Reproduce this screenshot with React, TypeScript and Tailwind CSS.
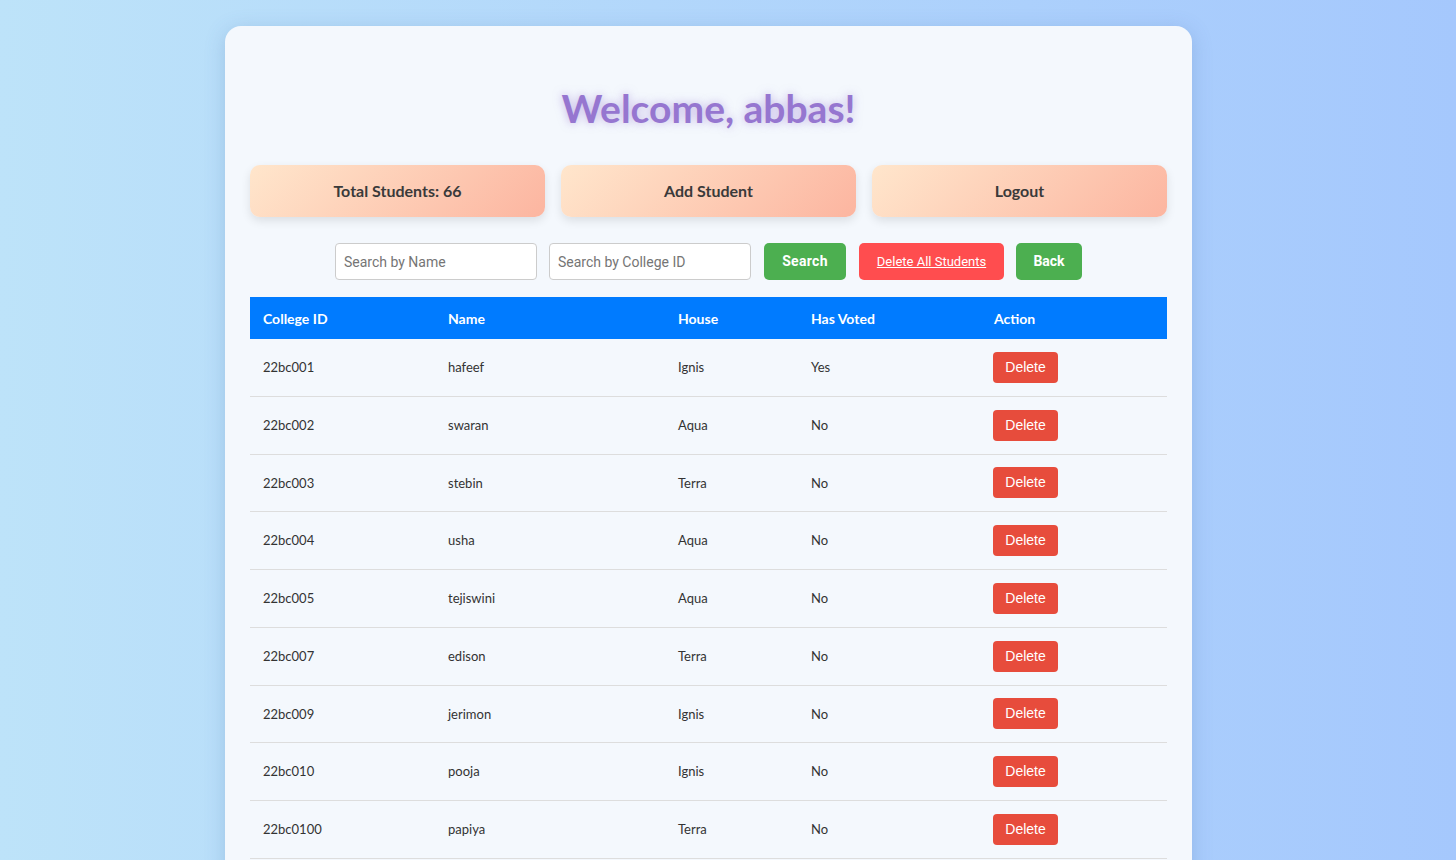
import React from "react";

const rows = [
  ["22bc001", "hafeef", "Ignis", "Yes"],
  ["22bc002", "swaran", "Aqua", "No"],
  ["22bc003", "stebin", "Terra", "No"],
  ["22bc004", "usha", "Aqua", "No"],
  ["22bc005", "tejiswini", "Aqua", "No"],
  ["22bc007", "edison", "Terra", "No"],
  ["22bc009", "jerimon", "Ignis", "No"],
  ["22bc010", "pooja", "Ignis", "No"],
  ["22bc0100", "papiya", "Terra", "No"],
];

const cols = "grid grid-cols-[185px_230px_133px_183px_186px]";

export default function App() {
  return (
    <div
      className="min-h-screen w-full bg-gradient-to-r from-[#bde3f9] to-[#a5c8fd] pt-[26px] pb-10"
      style={{ fontFamily: "Lato, 'Noto Sans', sans-serif" }}
    >
      <div className="ml-[225px] w-[967px] rounded-[16px] bg-[#f4f8fd] px-[25px] pt-[57px] pb-6 shadow-[0_4px_20px_rgba(70,110,170,0.25)]">
        <h1
          className="text-center text-[39px] font-bold leading-[50px] text-[#9676d0]"
          style={{ textShadow: "0 0 10px rgba(150,118,208,0.55)" }}
        >
          Welcome, abbas!
        </h1>
        <div className="mt-[32px] flex gap-[16px]">
          {["Total Students: 66", "Add Student", "Logout"].map((t) => (
            <div
              key={t}
              className="flex h-[52px] flex-1 items-center justify-center rounded-[10px] bg-[linear-gradient(135deg,#ffe6cc,#fcb5a0)] text-[16px] font-bold text-[#3a3a3a] shadow-[0_4px_10px_rgba(0,0,0,0.1)]"
            >
              {t}
            </div>
          ))}
        </div>
        <div
          className="mt-[26px] flex items-center justify-center gap-[12px]"
          style={{ fontFamily: "Roboto, 'Liberation Sans', sans-serif" }}
        >
          <input
            placeholder="Search by Name"
            className="h-[37px] w-[202px] rounded-[4px] border border-[#cccccc] bg-white px-[8px] text-[14px] text-[#333] placeholder:text-[#757575] outline-none"
          />
          <input
            placeholder="Search by College ID"
            className="h-[37px] w-[202px] rounded-[4px] border border-[#cccccc] bg-white px-[8px] text-[14px] text-[#333] placeholder:text-[#757575] outline-none"
          />
          <button className="ml-[1px] h-[37px] w-[82px] rounded-[5px] bg-[#4caf50] text-[14px] font-bold tracking-[0.3px] text-white">
            Search
          </button>
          <button className="ml-[1px] h-[37px] w-[145px] rounded-[5px] bg-[#ff4d4f] text-[13px] text-white underline decoration-white">
            Delete All Students
          </button>
          <button className="h-[37px] w-[66px] rounded-[5px] bg-[#4caf50] text-[14px] font-bold text-white">
            Back
          </button>
        </div>
        <div className="mt-[17px]">
          <div className={`${cols} h-[42px] items-center bg-[#007bff] text-[14px] font-bold text-white`}>
            {["College ID", "Name", "House", "Has Voted", "Action"].map((h) => (
              <div key={h} className="px-[13px]">
                {h}
              </div>
            ))}
          </div>
          {rows.map((r) => (
            <div
              key={r[0]}
              className={`${cols} h-[57.75px] items-center border-b border-[#dddddd] text-[13px] text-[#333]`}
            >
              {r.map((c, i) => (
                <div key={i} className="px-[13px] pt-[1px]">
                  {c}
                </div>
              ))}
              <div className="px-[12px]">
                <button
                  className="h-[31px] w-[65px] rounded-[4px] bg-[#e74c3c] text-[14px] text-white"
                  style={{ fontFamily: "'Liberation Sans', Arial, sans-serif" }}
                >
                  Delete
                </button>
              </div>
            </div>
          ))}
        </div>
      </div>
    </div>
  );
}
